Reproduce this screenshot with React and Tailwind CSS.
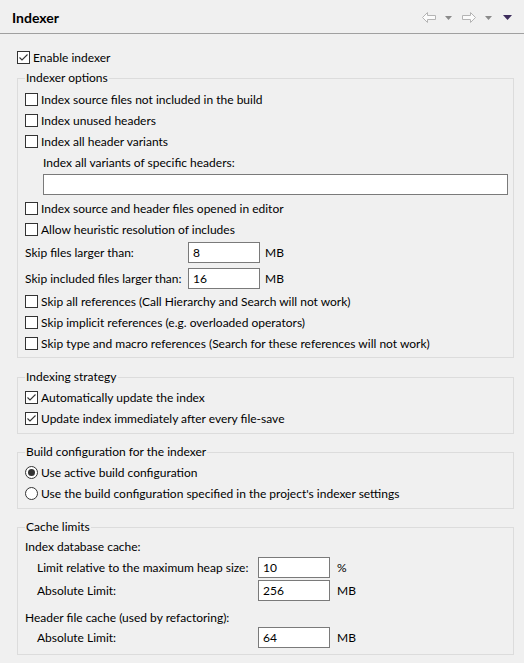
import React from 'react';

function Check({ checked }) {
  return (
    <span className="w-[13px] h-[13px] shrink-0 border border-[#333333] bg-white flex items-center justify-center">
      {checked && (
        <svg width="11" height="11" viewBox="0 0 11 11">
          <polyline points="1.5,5.5 4,8 9.5,2.5" fill="none" stroke="#333333" strokeWidth="1.1" />
        </svg>
      )}
    </span>
  );
}

function CheckRow({ checked, children }) {
  return (
    <div className="h-[21px] flex items-center">
      <Check checked={checked} />
      <span className="ml-[3px] whitespace-nowrap">{children}</span>
    </div>
  );
}

function RadioRow({ checked, children }) {
  return (
    <div className="h-[21px] flex items-center">
      <span className="w-[13px] h-[13px] shrink-0 rounded-full border border-[#333333] bg-white flex items-center justify-center">
        {checked && <span className="w-[7px] h-[7px] rounded-full bg-[#333333]" />}
      </span>
      <span className="ml-[3px] whitespace-nowrap">{children}</span>
    </div>
  );
}

function Field({ value }) {
  return (
    <div className="w-[72px] h-[21px] shrink-0 border border-[#7a7a7a] bg-white pl-[4px] flex items-center">
      {value}
    </div>
  );
}

function Group({ title, className = '', children }) {
  return (
    <fieldset className={`border border-[#dcdcdc] pl-[7px] pr-[5px] ${className}`}>
      <legend className="px-px leading-4 h-4">{title}</legend>
      {children}
    </fieldset>
  );
}

function NavArrow({ flip }) {
  return (
    <svg width="14" height="11" viewBox="0 0 14 11" className={flip ? '-scale-x-100' : ''}>
      <path d="M5.5 0.5 L0.5 5.5 L5.5 10.5 L5.5 7.5 L13.5 7.5 L13.5 3.5 L5.5 3.5 Z" fill="#fbfbfb" stroke="#b4b4b4" strokeWidth="1" />
    </svg>
  );
}

function SmallDrop({ color }) {
  return (
    <svg width="7" height="4" viewBox="0 0 7 4">
      <path d="M0 0 H7 L3.5 4 Z" fill={color} />
    </svg>
  );
}

export default function App() {
  return (
    <div className="w-[524px] h-[663px] bg-[#f0f0f0] text-[12px] text-black font-['Lato',sans-serif] overflow-hidden">
      {/* Title bar */}
      <div className="h-[34px] border-b border-[#a0a0a0] pl-[12px] pr-[12px] flex items-center justify-between">
        <span className="font-bold text-[14px] pt-[2px]">Indexer</span>
        <div className="flex items-center pt-[2px]">
          <NavArrow />
          <span className="ml-[9px]"><SmallDrop color="#8a8a8a" /></span>
          <span className="ml-[10px]"><NavArrow flip /></span>
          <span className="ml-[9px]"><SmallDrop color="#8a8a8a" /></span>
          <span className="ml-[11px]">
            <svg width="9" height="5" viewBox="0 0 9 5"><path d="M0 0 H9 L4.5 5 Z" fill="#3d2c5c" /></svg>
          </span>
        </div>
      </div>

      <div className="pl-[17px] pr-[10px] pt-[13px]">
        <CheckRow checked>Enable indexer</CheckRow>

        <Group title="Indexer options" className="mt-[2px] pb-[3px]">
          <div className="mt-[3px]">
            <CheckRow>Index source files not included in the build</CheckRow>
            <CheckRow>Index unused headers</CheckRow>
            <CheckRow>Index all header variants</CheckRow>
          </div>
          <div className="pl-[18px]">
            <div className="h-[21px] flex items-center">Index all variants of specific headers:</div>
            <div className="mt-px h-[21px] border border-[#7a7a7a] bg-white" />
          </div>
          <div className="mt-[3px]">
            <CheckRow>Index source and header files opened in editor</CheckRow>
            <CheckRow>Allow heuristic resolution of includes</CheckRow>
          </div>
          <div className="mt-[2px] flex items-center">
            <span className="w-[163px]">Skip files larger than:</span>
            <Field value="8" />
            <span className="ml-[5px]">MB</span>
          </div>
          <div className="mt-[5px] flex items-center">
            <span className="w-[163px]">Skip included files larger than:</span>
            <Field value="16" />
            <span className="ml-[5px]">MB</span>
          </div>
          <div className="mt-[2px]">
            <CheckRow>Skip all references (Call Hierarchy and Search will not work)</CheckRow>
            <CheckRow>Skip implicit references (e.g. overloaded operators)</CheckRow>
            <CheckRow>Skip type and macro references (Search for these references will not work)</CheckRow>
          </div>
        </Group>

        <Group title="Indexing strategy" className="mt-[11px] pb-[4px]">
          <div className="mt-[2px]">
            <CheckRow checked>Automatically update the index</CheckRow>
            <CheckRow checked>Update index immediately after every file-save</CheckRow>
          </div>
        </Group>

        <Group title="Build configuration for the indexer" className="mt-[10px] pb-[4px]">
          <div className="mt-[2px]">
            <RadioRow checked>Use active build configuration</RadioRow>
            <RadioRow>Use the build configuration specified in the project's indexer settings</RadioRow>
          </div>
        </Group>

        <Group title="Cache limits" className="mt-[10px] pb-[6px]">
          <div className="mt-[2px] h-[20px] flex items-center">Index database cache:</div>
          <div className="pl-[12px]">
            <div className="flex items-center">
              <span className="w-[221px] whitespace-nowrap">Limit relative to the maximum heap size:</span>
              <Field value="10" />
              <span className="ml-[7px]">%</span>
            </div>
            <div className="mt-[2px] flex items-center">
              <span className="w-[221px]">Absolute Limit:</span>
              <Field value="256" />
              <span className="ml-[7px]">MB</span>
            </div>
          </div>
          <div className="mt-[7px] h-[19px] flex items-center">Header file cache (used by refactoring):</div>
          <div className="pl-[12px] flex items-center">
            <span className="w-[221px]">Absolute Limit:</span>
            <Field value="64" />
            <span className="ml-[7px]">MB</span>
          </div>
        </Group>
      </div>
    </div>
  );
}
